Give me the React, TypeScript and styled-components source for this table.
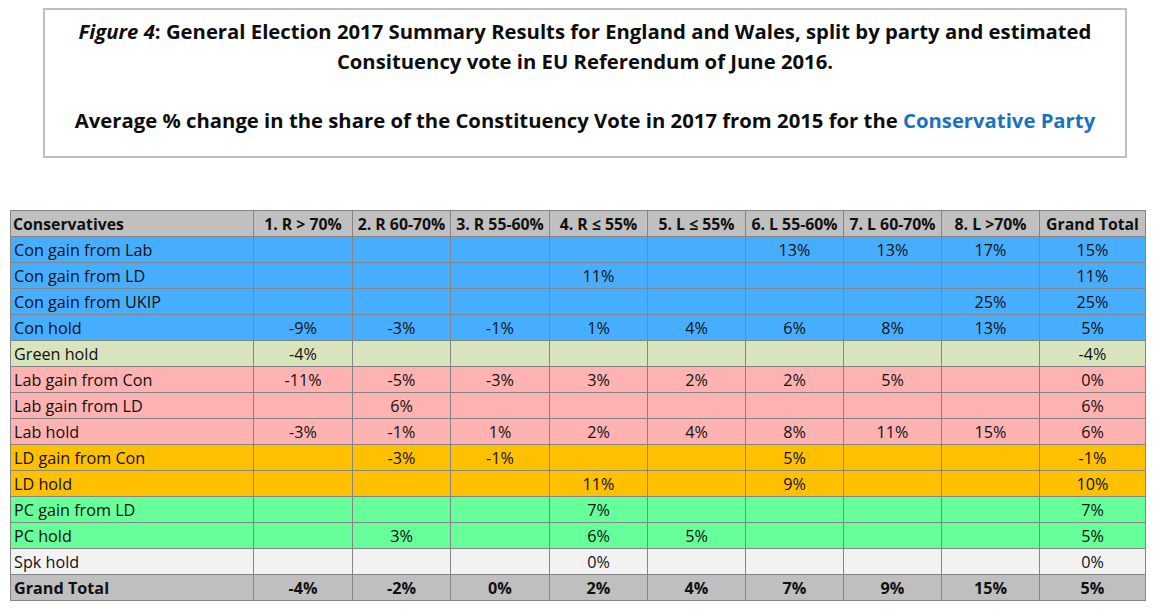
import React from 'react';
import styled, { createGlobalStyle } from 'styled-components';

const GlobalStyle = createGlobalStyle`
  html, body {
    margin: 0;
    padding: 0;
    background: #ffffff;
  }
  body {
    font-family: 'Open Sans', 'Liberation Sans', sans-serif;
    color: #111;
  }
`;

const Page = styled.div`
  width: 1158px;
  height: 610px;
  padding-top: 8px;
  box-sizing: border-box;
  overflow: hidden;
`;

const TitleBox = styled.div`
  margin-left: 43px;
  width: 1084px;
  height: 150px;
  box-sizing: border-box;
  border: 2px solid #bfbfbf;
  padding-top: 7px;
  text-align: center;
  font-weight: 700;
  font-size: 20.3px;
  line-height: 29.5px;
  color: #0d0d0d;
  white-space: nowrap;
`;

const TitleLine = styled.div<{ $gap?: boolean }>`
  margin-top: ${(p) => (p.$gap ? '29.5px' : '0')};
`;

const Blue = styled.span`
  color: #1a73c0;
`;

const Table = styled.table`
  margin: 52px 0 0 10px;
  border-collapse: collapse;
  table-layout: fixed;
  width: 1135px;
  font-size: 16.2px;
  border: 1px solid #222;
`;

const rowColors: Record<string, string> = {
  head: '#c0c0c0',
  con: '#47aeff',
  green: '#d8e4bc',
  lab: '#ffb2b2',
  ld: '#ffc000',
  pc: '#66ff99',
  spk: '#f2f2f2',
  total: '#bfbfbf',
};

const Row = styled.tr<{ $kind: string }>`
  background: ${(p) => rowColors[p.$kind]};
  height: 26px;
  font-weight: ${(p) => (p.$kind === 'head' || p.$kind === 'total' ? 700 : 400)};
`;

const Cell = styled.td<{ $first?: boolean }>`
  border: 1px solid #858585;
  padding: 0 3px;
  height: 25px;
  line-height: 24px;
  text-align: ${(p) => (p.$first ? 'left' : 'center')};
  white-space: nowrap;
  overflow: hidden;
  color: #111;
`;

const HeadCell = styled(Cell).attrs({ as: 'th' })`
  font-size: 15.8px;
  padding: 0 2px;
`;

const widths = [243, 99, 98, 99, 98, 98, 98, 98, 98, 106];

const headers = [
  'Conservatives',
  '1. R > 70%',
  '2. R 60-70%',
  '3. R 55-60%',
  '4. R ≤ 55%',
  '5. L ≤ 55%',
  '6. L 55-60%',
  '7. L 60-70%',
  '8. L >70%',
  'Grand Total',
];

type RowData = { kind: string; label: string; values: string[] };

const rows: RowData[] = [
  { kind: 'con', label: 'Con gain from Lab', values: ['', '', '', '', '', '13%', '13%', '17%', '15%'] },
  { kind: 'con', label: 'Con gain from LD', values: ['', '', '', '11%', '', '', '', '', '11%'] },
  { kind: 'con', label: 'Con gain from UKIP', values: ['', '', '', '', '', '', '', '25%', '25%'] },
  { kind: 'con', label: 'Con hold', values: ['-9%', '-3%', '-1%', '1%', '4%', '6%', '8%', '13%', '5%'] },
  { kind: 'green', label: 'Green hold', values: ['-4%', '', '', '', '', '', '', '', '-4%'] },
  { kind: 'lab', label: 'Lab gain from Con', values: ['-11%', '-5%', '-3%', '3%', '2%', '2%', '5%', '', '0%'] },
  { kind: 'lab', label: 'Lab gain from LD', values: ['', '6%', '', '', '', '', '', '', '6%'] },
  { kind: 'lab', label: 'Lab hold', values: ['-3%', '-1%', '1%', '2%', '4%', '8%', '11%', '15%', '6%'] },
  { kind: 'ld', label: 'LD gain from Con', values: ['', '-3%', '-1%', '', '', '5%', '', '', '-1%'] },
  { kind: 'ld', label: 'LD hold', values: ['', '', '', '11%', '', '9%', '', '', '10%'] },
  { kind: 'pc', label: 'PC gain from LD', values: ['', '', '', '7%', '', '', '', '', '7%'] },
  { kind: 'pc', label: 'PC hold', values: ['', '3%', '', '6%', '5%', '', '', '', '5%'] },
  { kind: 'spk', label: 'Spk hold', values: ['', '', '', '0%', '', '', '', '', '0%'] },
  { kind: 'total', label: 'Grand Total', values: ['-4%', '-2%', '0%', '2%', '4%', '7%', '9%', '15%', '5%'] },
];

function App() {
  return (
    <Page>
      <GlobalStyle />
      <TitleBox>
        <TitleLine>
          <i>Figure 4</i>: General Election 2017 Summary Results for England and Wales, split by party and estimated
        </TitleLine>
        <TitleLine>Consituency vote in EU Referendum of June 2016.</TitleLine>
        <TitleLine $gap>
          Average % change in the share of the Constituency Vote in 2017 from 2015 for the <Blue>Conservative Party</Blue>
        </TitleLine>
      </TitleBox>
      <Table>
        <colgroup>
          {widths.map((w, i) => (
            <col key={i} style={{ width: w }} />
          ))}
        </colgroup>
        <thead>
          <Row $kind="head">
            {headers.map((h, i) => (
              <HeadCell key={h} $first={i === 0}>
                {h}
              </HeadCell>
            ))}
          </Row>
        </thead>
        <tbody>
          {rows.map((r) => (
            <Row key={r.label} $kind={r.kind}>
              <Cell $first>{r.label}</Cell>
              {r.values.map((v, i) => (
                <Cell key={i}>{v}</Cell>
              ))}
            </Row>
          ))}
        </tbody>
      </Table>
    </Page>
  );
}

export default App;
